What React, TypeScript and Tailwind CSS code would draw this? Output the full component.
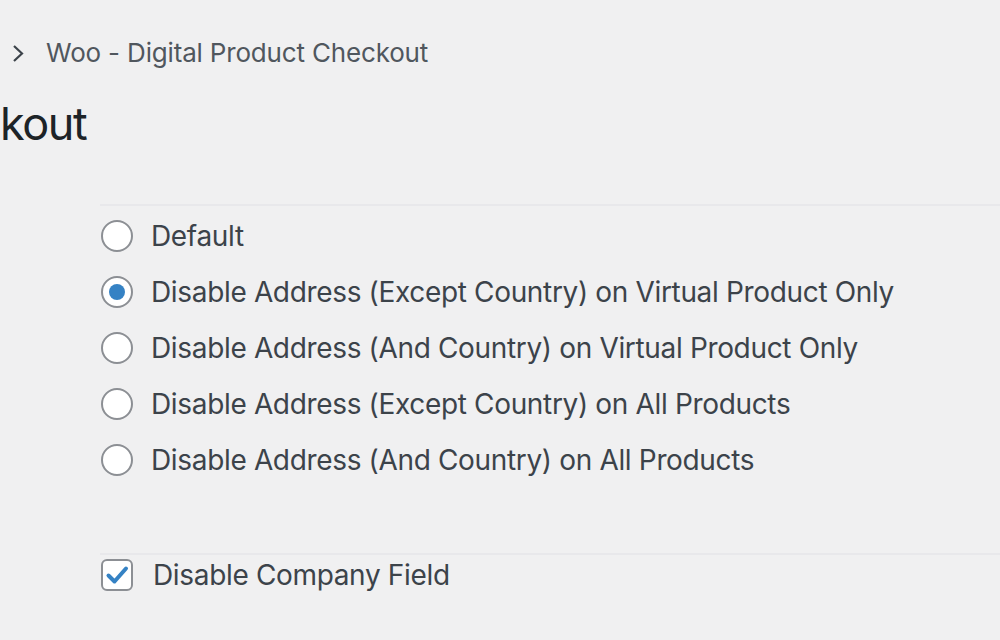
const options = [
  'Default',
  'Disable Address (Except Country) on Virtual Product Only',
  'Disable Address (And Country) on Virtual Product Only',
  'Disable Address (Except Country) on All Products',
  'Disable Address (And Country) on All Products',
];

function Radio({ checked }: { checked: boolean }) {
  return (
    <span className="flex h-8 w-8 shrink-0 items-center justify-center rounded-full border-2 border-[#8c8f94] bg-white">
      {checked && <span className="h-4 w-4 rounded-full bg-[#3582c4]" />}
    </span>
  );
}

export default function App() {
  const selected = 1;

  return (
    <div
      className="h-[640px] w-[1000px] overflow-hidden bg-[#f0f0f1]"
      style={{ fontFamily: 'Inter, "Noto Sans", sans-serif' }}
    >
      <div className="mt-[38px] flex h-[30px] items-center pl-[11px] text-[#50575e]">
        <svg width="14" height="20" viewBox="0 0 14 20" className="mr-[21px]">
          <path d="M3 3 L11 10.5 L3 18" fill="none" stroke="#3c434a" strokeWidth="2.2" />
        </svg>
        <span className="text-[26px] leading-none tracking-[-0.17px]">Woo - Digital Product Checkout</span>
      </div>

      <h1 className="mt-[28px] text-[45px] leading-[56px] font-normal tracking-[-1.4px] text-[#1d2327]">kout</h1>

      <div className="ml-[100px] mt-[52px]">
        <div className="h-[2px] bg-[#e8e8eb]" />
        <div className="mt-[2px]">
          {options.map((label, i) => (
            <label
              key={label}
              className="flex h-[56px] items-center gap-[18px] pl-[1px] text-[28px] tracking-[-0.34px] text-[#3c434a]"
            >
              <Radio checked={i === selected} />
              <span>{label}</span>
            </label>
          ))}
        </div>

        <div className="mt-[65px] h-[2px] bg-[#e8e8eb]" />
        <label className="flex h-[40px] items-center gap-[20px] pl-[1px] text-[28px] tracking-[-0.34px] text-[#3c434a]">
          <span className="flex h-8 w-8 shrink-0 items-center justify-center rounded-[6px] border-2 border-[#8c8f94] bg-white">
            <svg width="24" height="24" viewBox="0 0 24 24">
              <path
                d="M3.5 12.5 L9.5 18.5 L21 5.5"
                fill="none"
                stroke="#3582c4"
                strokeWidth="4"
                strokeLinecap="round"
                strokeLinejoin="round"
              />
            </svg>
          </span>
          <span>Disable Company Field</span>
        </label>
      </div>
    </div>
  );
}
